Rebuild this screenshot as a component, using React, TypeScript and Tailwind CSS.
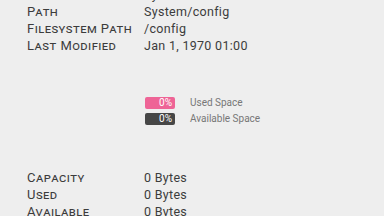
import React from "react";

const rowsTop = [
  ["Name", "System"],
  ["Path", "System/config"],
  ["Filesystem Path", "/config"],
  ["Last Modified", "Jan 1, 1970 01:00"],
];
const rowsBottom = [
  ["Capacity", "0 Bytes"],
  ["Used", "0 Bytes"],
  ["Available", "0 Bytes"],
];

function Rows({ rows }: { rows: string[][] }) {
  return (
    <div className="flex flex-col px-[27px]">
      {rows.map(([k, v]) => (
        <div key={k} className="grid grid-cols-[117px_1fr] h-[17px] leading-[17px] text-[#3c3c3c] whitespace-nowrap">
          <span className="[font-variant:small-caps] text-[13px] tracking-[0.45px]">{k}</span>
          <span className="text-[12.5px] tracking-[0.3px]">{v}</span>
        </div>
      ))}
    </div>
  );
}

export default function App() {
  return (
    <div className="w-[384px] h-[216px] overflow-hidden bg-[#eeeeee]" style={{ fontFamily: "Roboto, 'Noto Sans', sans-serif" }}>
      <div className="-mt-[14px]">
        <Rows rows={rowsTop} />
        <div className="h-[115px] flex flex-col pl-[145px] pt-[43px] gap-[4px]">
          <div className="flex items-center gap-[15px]">
            <div className="w-[30px] h-[12px] rounded-[2px] bg-[#ee6496] text-white text-[10px] leading-[12px] text-right pr-[3px]">0%</div>
            <span className="text-[10px] leading-[12px] text-[#777777]">Used Space</span>
          </div>
          <div className="flex items-center gap-[15px]">
            <div className="w-[30px] h-[12px] rounded-[2px] bg-[#464646] text-white text-[10px] leading-[12px] text-right pr-[3px]">0%</div>
            <span className="text-[10px] leading-[12px] text-[#777777]">Available Space</span>
          </div>
        </div>
        <Rows rows={rowsBottom} />
      </div>
    </div>
  );
}
